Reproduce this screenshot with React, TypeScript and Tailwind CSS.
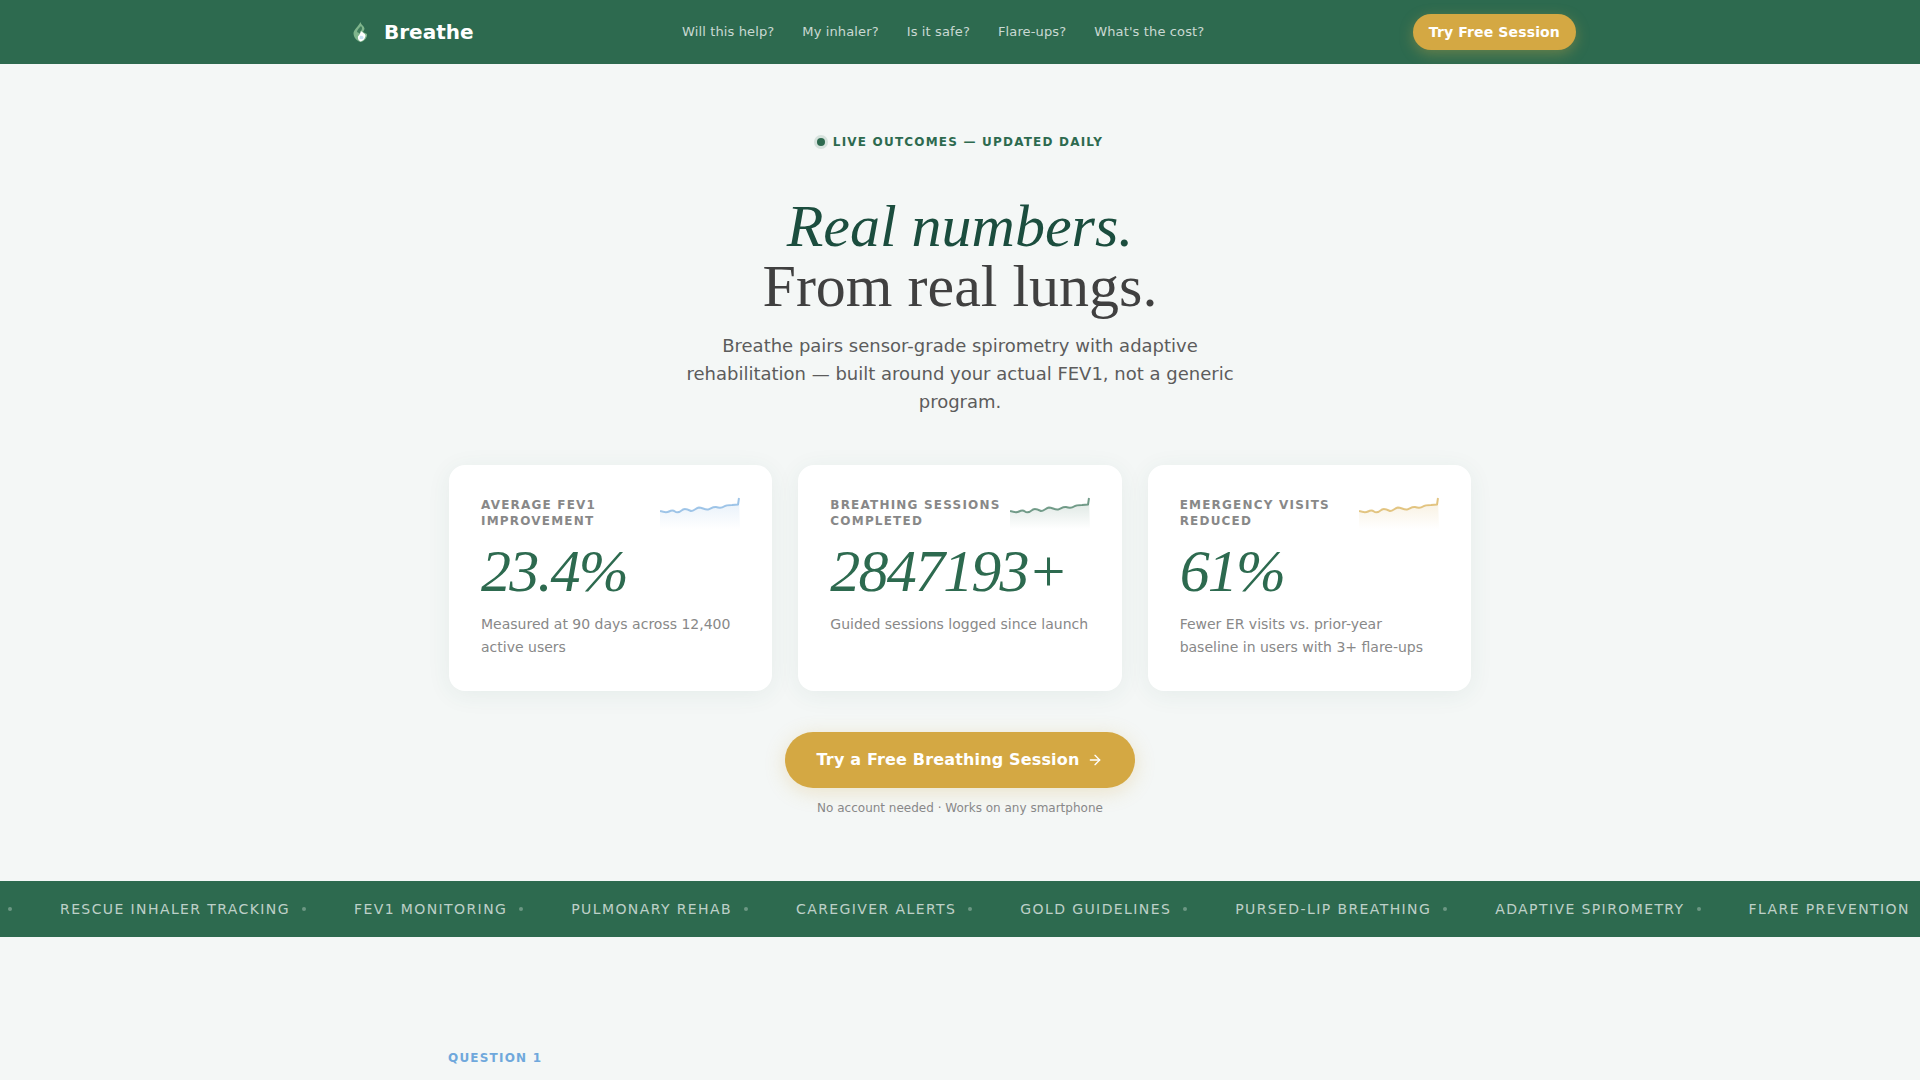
import { ArrowRight } from 'lucide-react';

const navLinks = ['Will this help?', 'My inhaler?', 'Is it safe?', 'Flare-ups?', "What's the cost?"];

const tickerItems = [
  'RESCUE INHALER TRACKING',
  'FEV1 MONITORING',
  'PULMONARY REHAB',
  'CAREGIVER ALERTS',
  'GOLD GUIDELINES',
  'PURSED-LIP BREATHING',
  'ADAPTIVE SPIROMETRY',
  'FLARE PREVENTION',
];

const wave =
  'M0 14 C3 15 6 16 9 14.5 C11 13.5 13 13 15 14.5 C17 16 20 15 23 12.5 C25 11.5 28 12.5 31 14 C34 14 36 11 39 10.5 C42 10.5 45 13 48 12.5 C51 11.5 53 9.5 56 10 C59 11 62 11 64 9.5 C66 8 69 8 72 8 L78 7.5 L79 1';

function Sparkline({ color, id }: { color: string; id: string }) {
  return (
    <svg width="80" height="32" viewBox="0 0 80 32" className="shrink-0">
      <defs>
        <linearGradient id={id} x1="0" y1="0" x2="0" y2="1">
          <stop offset="0%" stopColor={color} stopOpacity="0.18" />
          <stop offset="100%" stopColor={color} stopOpacity="0" />
        </linearGradient>
      </defs>
      <path d={`${wave} L80 32 L0 32 Z`} fill={`url(#${id})`} />
      <path d={wave} fill="none" stroke={color} strokeOpacity="0.65" strokeWidth="2" strokeLinejoin="round" />
    </svg>
  );
}

function LogoMark() {
  return (
    <svg width="20" height="24" viewBox="0 0 20 24" className="shrink-0">
      <path d="M8.5 2 C9 5 12.5 6 12.5 9 L11 12 L15 14 C15.5 17 13 21 9 22 C5 21.5 1.5 17.5 1.5 13 C2 9.5 6 7 8.5 2 Z" fill="#7fb58c" />
      <path d="M9 6 C11 8 10 10 8 12 L9 14 L5 12 C5 10 7 8 9 6 Z" fill="#3f7d5c" />
      <path d="M9 11 C11 13 14 14 13.5 16 C13 19 11 21 8.5 21.5 C6.5 20.5 5.5 18.5 6 16.5 C7 15.5 8.5 13.5 9 11 Z" fill="#ffffff" />
      <path d="M8 16 C10 15.5 11.5 16.5 11.5 18 C10.5 19.5 8.5 19.5 7.5 18.5 Z" fill="#c8e2f4" />
    </svg>
  );
}

function StatCard({
  label,
  value,
  note,
  color,
  id,
}: {
  label: string[];
  value: string;
  note: string[];
  color: string;
  id: string;
}) {
  return (
    <div className="h-[226px] rounded-2xl bg-white px-8 pt-8 shadow-[0_4px_24px_rgba(45,106,79,0.07)]">
      <div className="flex justify-between items-start h-[32px]">
        <p className="text-[12px] leading-[16px] font-bold tracking-[0.1em] text-[#888888] whitespace-nowrap">
          {label[0]}
          <br />
          {label[1]}
        </p>
        <Sparkline color={color} id={id} />
      </div>
      <p className="mt-[8px] font-['Liberation_Serif',serif] italic text-[60px] leading-[68px] tracking-[-0.03em] text-[#2d6a4f]">
        {value}
      </p>
      <p className="mt-[8px] text-[14px] leading-[23px] text-[#888888] whitespace-nowrap">
        {note[0]}
        <br />
        {note[1]}
      </p>
    </div>
  );
}

export default function App() {
  return (
    <div className="font-['DejaVu_Sans',sans-serif] h-[1080px] overflow-hidden bg-[#f4f7f6]">
      <nav className="h-16 bg-[#2d6a4f]">
        <div className="mx-auto w-[1280px] h-full pl-[32px] pr-[24px] flex items-center justify-between">
          <div className="flex items-center gap-[12px]">
            <LogoMark />
            <span className="text-[20px] font-bold text-white">Breathe</span>
          </div>
          <div className="flex items-center gap-[28px]">
            {navLinks.map((l) => (
              <span key={l} className="text-[13px] tracking-[0.01em] text-white/75">
                {l}
              </span>
            ))}
          </div>
          <span className="rounded-full bg-[#d4a843] px-[16px] py-[9px] text-[14px] leading-[18px] font-bold tracking-[0.01em] text-white shadow-[0_4px_14px_rgba(212,168,67,0.35)]">
            Try Free Session
          </span>
        </div>
      </nav>

      <section className="pt-[71px] flex flex-col items-center">
        <div className="flex items-center gap-[8px] h-[14px]">
          <span className="w-2 h-2 rounded-full bg-[#2d6a4f] shadow-[0_0_0_3px_rgba(45,106,79,0.15)]" />
          <span className="text-[12px] font-bold tracking-[0.1em] text-[#2d6a4f]">
            LIVE OUTCOMES — UPDATED DAILY
          </span>
        </div>
        <h1 className="mt-[47px] text-center font-['Liberation_Serif',serif] font-normal text-[60px] leading-[60px] text-[#404040]">
          <em className="text-[#1b4d3e]">Real numbers.</em>
          <br />
          From real lungs.
        </h1>
        <p className="mt-[16px] w-[560px] text-center text-[18px] leading-[28px] text-[#5c5c5c]">
          Breathe pairs sensor-grade spirometry with adaptive rehabilitation — built around your actual FEV1, not a
          generic program.
        </p>
        <div className="mt-[49px] w-[1022px] grid grid-cols-3 gap-[26px]">
          <StatCard
            id="sp-blue"
            color="#6fa8dc"
            label={['AVERAGE FEV1', 'IMPROVEMENT']}
            value="23.4%"
            note={['Measured at 90 days across 12,400', 'active users']}
          />
          <StatCard
            id="sp-green"
            color="#2d6a4f"
            label={['BREATHING SESSIONS', 'COMPLETED']}
            value="2847193+"
            note={['Guided sessions logged since launch', '']}
          />
          <StatCard
            id="sp-gold"
            color="#d4a843"
            label={['EMERGENCY VISITS', 'REDUCED']}
            value="61%"
            note={['Fewer ER visits vs. prior-year', 'baseline in users with 3+ flare-ups']}
          />
        </div>
        <button className="mt-[41px] h-[56px] rounded-full bg-[#d4a843] px-[32px] flex items-center gap-[8px] text-[16px] font-bold tracking-[0.01em] text-white shadow-[0_4px_20px_rgba(212,168,67,0.25)]">
          Try a Free Breathing Session
          <ArrowRight size={16} strokeWidth={2} />
        </button>
        <p className="mt-[12px] text-[12px] leading-[16px] text-[#888888]">No account needed · Works on any smartphone</p>
      </section>

      <div className="mt-[65px] h-[56px] bg-[#2d6a4f] flex items-center overflow-hidden whitespace-nowrap pl-[8px]">
        <span className="shrink-0 w-1 h-1 rounded-full bg-white/30 mr-[48px]" />
        {tickerItems.map((t) => (
          <span key={t} className="flex items-center shrink-0">
            <span className="text-[14px] tracking-[0.1em] text-white/70">{t}</span>
            <span className="w-1 h-1 rounded-full bg-white/30 ml-[12px] mr-[48px]" />
          </span>
        ))}
      </div>

      <div className="mx-auto w-[1024px] pt-[112px]">
        <p className="text-[12px] font-bold tracking-[0.1em] text-[#6fa8dc]">QUESTION 1</p>
      </div>
    </div>
  );
}
